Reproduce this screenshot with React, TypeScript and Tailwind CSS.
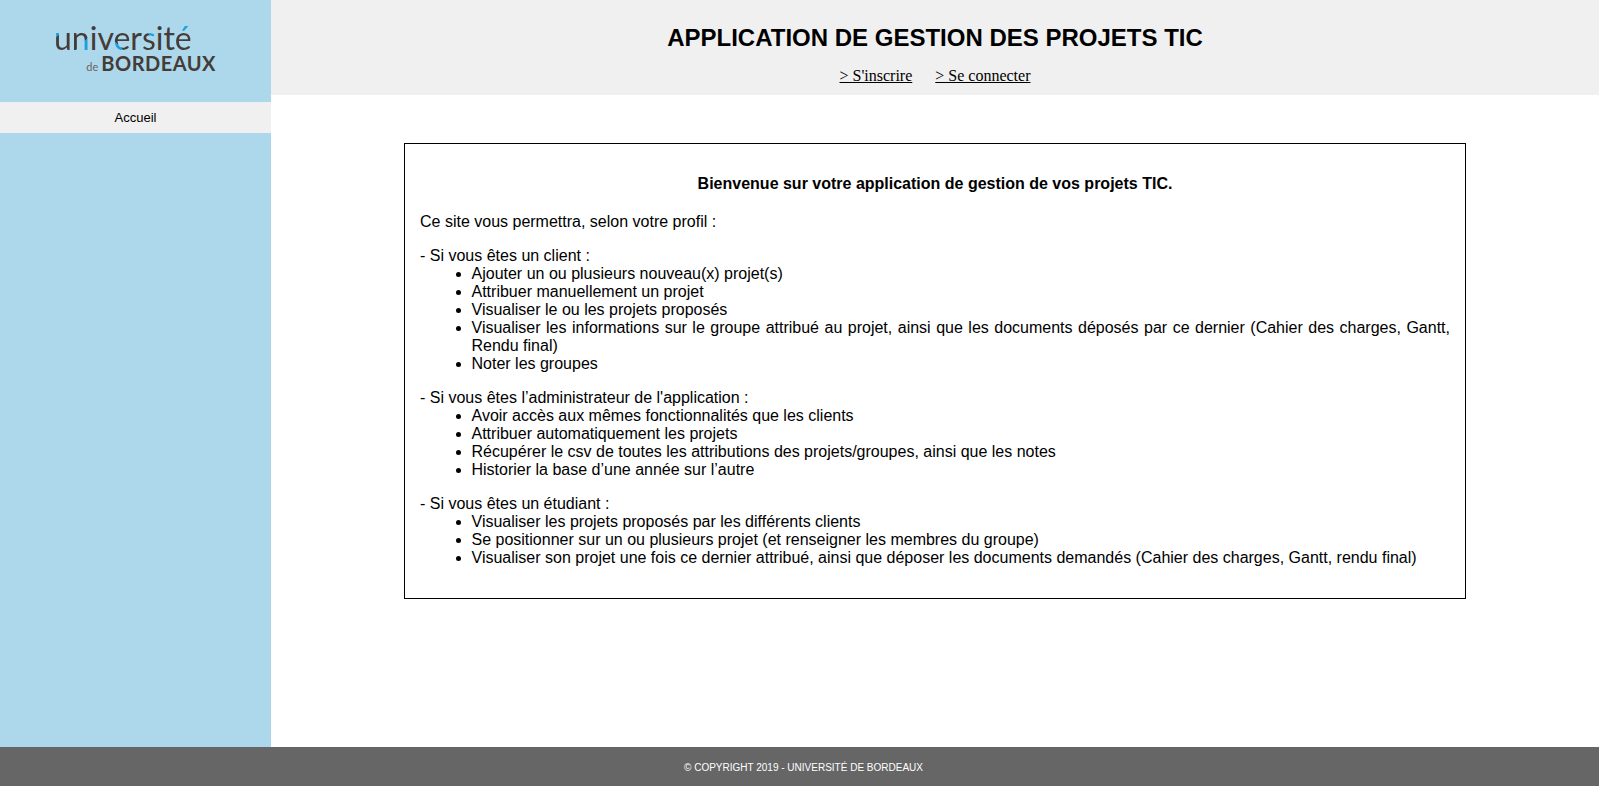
const clientItems = [
  "Ajouter un ou plusieurs nouveau(x) projet(s)",
  "Attribuer manuellement un projet",
  "Visualiser le ou les projets proposés",
  "Visualiser les informations sur le groupe attribué au projet, ainsi que les documents déposés par ce dernier (Cahier des charges, Gantt, Rendu final)",
  "Noter les groupes",
];

const adminItems = [
  "Avoir accès aux mêmes fonctionnalités que les clients",
  "Attribuer automatiquement les projets",
  "Récupérer le csv de toutes les attributions des projets/groupes, ainsi que les notes",
  "Historier la base d’une année sur l’autre",
];

const studentItems = [
  "Visualiser les projets proposés par les différents clients",
  "Se positionner sur un ou plusieurs projet (et renseigner les membres du groupe)",
  "Visualiser son projet une fois ce dernier attribué, ainsi que déposer les documents demandés (Cahier des charges, Gantt, rendu final)",
];

function Logo() {
  return (
    <div className="flex flex-col w-[162px] ml-[54px] pt-[22px] text-[#453c38] font-['Lato',sans-serif]">
      <div className="text-[32px] leading-[32px] font-normal whitespace-nowrap">
        <span className="bg-[linear-gradient(135deg,#1aa0e0_38%,#453c38_38%)] bg-clip-text text-transparent">u</span>
        <span className="bg-[linear-gradient(135deg,#453c38_62%,#1aa0e0_62%)] bg-clip-text text-transparent">n</span>
        iv
        <span className="bg-[linear-gradient(45deg,#1aa0e0_32%,#453c38_32%)] bg-clip-text text-transparent">e</span>
        r
        <span className="bg-[linear-gradient(225deg,#1aa0e0_45%,#453c38_45%)] bg-clip-text text-transparent">s</span>
        it
        <span className="bg-[linear-gradient(180deg,#1aa0e0_36%,#453c38_36%)] bg-clip-text text-transparent">é</span>
      </div>
      <div className="flex items-baseline justify-end mt-[-1px]">
        <span className="text-[11px] leading-none mr-[3px] text-[#6b6461]">de</span>
        <span className="text-[20px] leading-[20px] font-bold tracking-[0.5px]">BORDEAUX</span>
      </div>
    </div>
  );
}

function Section({ title, items }: { title: string; items: string[] }) {
  return (
    <div className="mt-4">
      <p>{title}</p>
      <ul className="list-disc pl-[51.5px] text-justify">
        {items.map((item) => (
          <li key={item}>{item}</li>
        ))}
      </ul>
    </div>
  );
}

export default function App() {
  return (
    <div className="h-screen flex flex-col bg-white text-black font-['Liberation_Sans',Arial,sans-serif]">
      <div className="flex flex-1 min-h-0">
        <aside className="w-[271px] shrink-0 bg-[#add8ec]">
          <div className="h-[102px]">
            <Logo />
          </div>
          <div className="h-[31px] flex items-center justify-center bg-[#f0f0f0] text-[13px]">Accueil</div>
        </aside>

        <main className="flex-1 min-w-0">
          <header className="h-[95px] bg-[#f0f0f0] text-center">
            <h1 className="pt-[24px] text-2xl leading-[28px] font-bold">APPLICATION DE GESTION DES PROJETS TIC</h1>
            <nav className="mt-[15px] flex justify-center gap-[23px] font-['Liberation_Serif',serif] text-base leading-[18px]">
              <a href="#" className="underline">&gt; S'inscrire</a>
              <a href="#" className="underline">&gt; Se connecter</a>
            </nav>
          </header>

          <div className="mx-[133px] mt-[48px] h-[456px] border border-black px-[15px] pt-[31px] text-base leading-[18px]">
            <p className="text-center font-bold">Bienvenue sur votre application de gestion de vos projets TIC.</p>
            <p className="mt-5">Ce site vous permettra, selon votre profil :</p>
            <Section title="- Si vous êtes un client :" items={clientItems} />
            <Section title="- Si vous êtes l’administrateur de l'application :" items={adminItems} />
            <Section title="- Si vous êtes un étudiant :" items={studentItems} />
          </div>
        </main>
      </div>

      <footer className="h-[39px] shrink-0 flex items-center justify-center pl-[8px] pt-[2px] bg-[#666666] text-white text-[10px]">
        © COPYRIGHT 2019 - UNIVERSITÉ DE BORDEAUX
      </footer>
    </div>
  );
}
